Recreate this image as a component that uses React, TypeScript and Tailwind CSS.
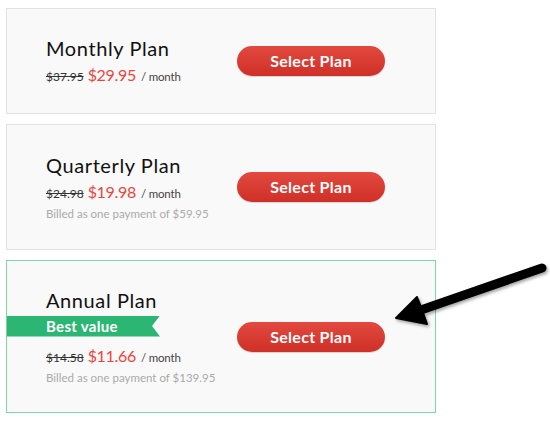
import React from "react";

interface Plan {
  name: string;
  was: string;
  now: string;
  billed?: string;
  best?: boolean;
  height: string;
}

const plans: Plan[] = [
  { name: "Monthly Plan", was: "$37.95", now: "$29.95", height: "h-[106px]" },
  {
    name: "Quarterly Plan",
    was: "$24.98",
    now: "$19.98",
    billed: "Billed as one payment of $59.95",
    height: "h-[126px]",
  },
  {
    name: "Annual Plan",
    was: "$14.58",
    now: "$11.66",
    billed: "Billed as one payment of $139.95",
    best: true,
    height: "h-[153px]",
  },
];

const PlanCard = ({ plan }: { plan: Plan }) => (
  <div
    className={`flex items-center bg-[#f9f9f9] border ${
      plan.best ? "border-[#7fd4aa]" : "border-[#e2e2e2]"
    } ${plan.height}`}
  >
    <div className="w-[230px] pl-[39px]">
      <h2 className="text-[20px] leading-[24px] tracking-[0.6px] text-[#111]">{plan.name}</h2>
      {plan.best && (
        <div className="-ml-[39px] mt-[4px] mb-[9px] w-[153px] h-[21px] pl-[39px] bg-[#2bb673] [clip-path:polygon(0_0,100%_0,145px_50%,100%_100%,0_100%)] flex items-center">
          <span className="text-[15px] font-bold tracking-[0.3px] text-white leading-none">Best value</span>
        </div>
      )}
      <p className={`flex items-baseline leading-[20px] ${plan.best ? "" : "mt-[5px]"}`}>
        <span className="text-[12px] text-[#333] line-through">{plan.was}</span>
        <span className="ml-[4px] text-[16px] tracking-[-0.3px] text-[#e8453c]">{plan.now}</span>
        <span className="ml-[5px] text-[11.5px] tracking-[-0.2px] text-[#444]">/ month</span>
      </p>
      {plan.billed && (
        <p className="mt-[2px] text-[11.5px] leading-[16px] text-[#aaa]">{plan.billed}</p>
      )}
    </div>
    <button className="w-[148px] h-[30px] rounded-full bg-gradient-to-b from-[#e2493e] to-[#cf2f27] text-white text-[16px] font-bold tracking-[0.3px] shadow-[0_1px_1px_rgba(0,0,0,0.15)]">
      Select Plan
    </button>
  </div>
);

export default function App() {
  return (
    <div
      className="relative w-[550px] h-[422px] bg-white pt-[8px] pl-[6px]"
      style={{ fontFamily: "Lato, 'Open Sans', sans-serif" }}
    >
      <div className="w-[430px] flex flex-col gap-[10px]">
        {plans.map((p) => (
          <PlanCard key={p.name} plan={p} />
        ))}
      </div>
      <svg
        className="absolute left-0 top-0 pointer-events-none"
        width="550"
        height="422"
        viewBox="0 0 550 422"
      >
        <defs>
          <filter id="sh" x="-20%" y="-20%" width="140%" height="140%">
            <feDropShadow dx="1.5" dy="2" stdDeviation="1.5" floodColor="#000" floodOpacity="0.35" />
          </filter>
        </defs>
        <g filter="url(#sh)">
          <line x1="418" y1="311" x2="542" y2="268" stroke="#000" strokeWidth="9" strokeLinecap="round" />
          <path d="M396 318 L417 297 L421 307 L427 324 Z" fill="#000" stroke="#000" strokeWidth="2" strokeLinejoin="round" />
        </g>
      </svg>
    </div>
  );
}
